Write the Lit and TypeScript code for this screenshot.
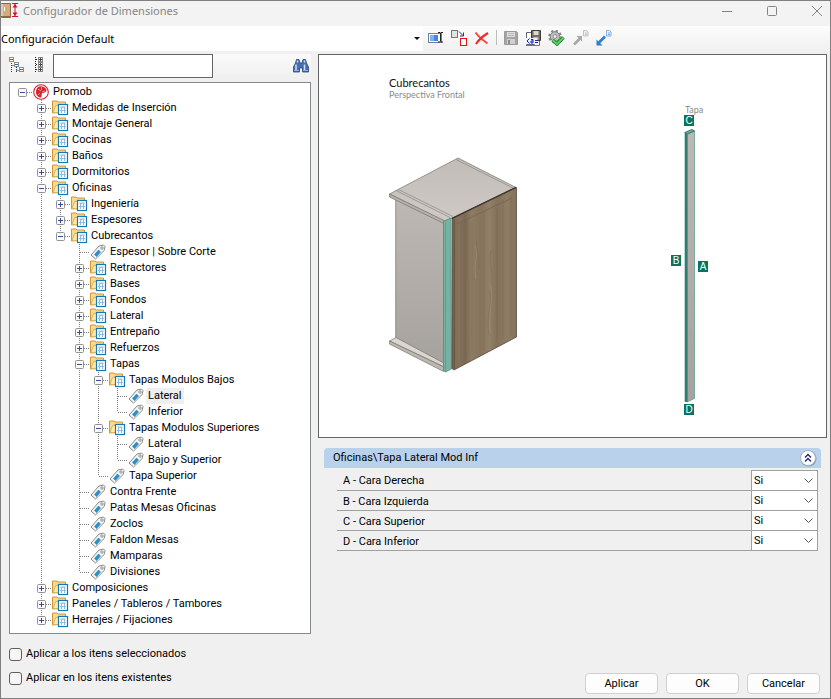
import { LitElement, html, svg, css, nothing } from "lit";
import { customElement, state } from "lit/decorators.js";
import { classMap } from "lit/directives/class-map.js";

interface Node {
  id: string;
  label: string;
  kind: "root" | "folder" | "tag";
  open?: boolean;
  children?: Node[];
}

const tag = (id: string, label: string): Node => ({ id, label, kind: "tag" });
const folder = (id: string, label: string, children?: Node[]): Node => ({
  id, label, kind: "folder", open: !!children, children,
});

const TREE: Node = {
  id: "promob", label: "Promob", kind: "root", open: true,
  children: [
    folder("medidas", "Medidas de Inserción"),
    folder("montaje", "Montaje General"),
    folder("cocinas", "Cocinas"),
    folder("banos", "Baños"),
    folder("dormitorios", "Dormitorios"),
    folder("oficinas", "Oficinas", [
      folder("ingenieria", "Ingeniería"),
      folder("espesores", "Espesores"),
      folder("cubrecantos", "Cubrecantos", [
        tag("espesor", "Espesor | Sobre Corte"),
        folder("retractores", "Retractores"),
        folder("bases", "Bases"),
        folder("fondos", "Fondos"),
        folder("lateral", "Lateral"),
        folder("entrepano", "Entrepaño"),
        folder("refuerzos", "Refuerzos"),
        folder("tapas", "Tapas", [
          folder("bajos", "Tapas Modulos Bajos", [
            tag("bajos-lateral", "Lateral"),
            tag("bajos-inferior", "Inferior"),
          ]),
          folder("superiores", "Tapas Modulos Superiores", [
            tag("sup-lateral", "Lateral"),
            tag("sup-bajo", "Bajo y Superior"),
          ]),
          tag("tapa-superior", "Tapa Superior"),
        ]),
        tag("contra", "Contra Frente"),
        tag("patas", "Patas Mesas Oficinas"),
        tag("zoclos", "Zoclos"),
        tag("faldon", "Faldon Mesas"),
        tag("mamparas", "Mamparas"),
        tag("divisiones", "Divisiones"),
      ]),
    ]),
    folder("composiciones", "Composiciones"),
    folder("paneles", "Paneles / Tableros / Tambores"),
    folder("herrajes", "Herrajes / Fijaciones"),
  ],
};

const PROPS = ["A - Cara Derecha", "B - Cara Izquierda", "C - Cara Superior", "D - Cara Inferior"];

const icons = {
  app: html`<svg width="17" height="17" viewBox="0 0 17 17">
    <rect x="0" y="1" width="10" height="15" rx="1" fill="#8a6a45"/>
    <rect x="0" y="2" width="9" height="12" fill="#d3ab7c"/>
    <rect x="0" y="2" width="2" height="12" fill="#e8cba4"/>
    <rect x="3" y="5" width="1" height="4" fill="#fff"/>
    <path d="M11 1.500h6M11 14.500h6M14 2v12" stroke="#d8102c" fill="none"/>
    <path d="M14 2l-2.500 3.500h5zM14 14l-2.500-3.500h5z" fill="#d8102c"/>
  </svg>`,
  root: html`<svg width="17" height="16" viewBox="0 0 17 16">
    <circle cx="8" cy="8" r="7.300" fill="#fff" stroke="#d5232f" stroke-width="1.100"/>
    <path d="M9 2.500C5 1.500 3 5 3 8c0 3.500 2.500 5.500 5 5.500 1-1.500.500-3 1-4.500 1.500 0 4-.500 4.500-2.500-.500-2.500-2-3.700-4.500-4z" fill="#d5232f"/>
    <path d="M5 5l3 2M8.500 3v3M9 8l3-1M5 11l2-2" stroke="#f6b6ba" stroke-width=".8"/>
  </svg>`,
  folder: html`<svg width="17" height="16" viewBox="0 0 17 16">
    <path d="M.500 13V1h4.500l1 1h7.500v2.500h1.500V12z" fill="#f9d98a" stroke="#d0963c"/>
    <path d="M1 12.500L3.500 5.500h11v7z" fill="#fde9ae" stroke="#e0b458"/>
    <rect x="6.500" y="4.500" width="9" height="10" fill="#fff" stroke="#1379b5" stroke-width="1.200"/>
    <path d="M8.500 6.500h5V8h-5z" fill="#9ec5e4"/>
    <path d="M9.500 7v6M12.500 7v6M8 10.500h6" stroke="#8dbce0" fill="none"/>
  </svg>`,
  tag: html`<svg width="17" height="16" viewBox="0 0 17 16">
    <path d="M1 11L9 2l4.500-1 1.500 1.500-.8 4L5.500 15z" fill="#f3f3f3" stroke="#8a8a8a"/>
    <path d="M4.500 10.500l4-4.500 2 2-4 4.500z" fill="#1c93d2" stroke="#2a80bb" stroke-width=".6"/>
    <circle cx="12" cy="4" r="1.200" fill="#fff" stroke="#777" stroke-width=".8"/>
  </svg>`,
  collapseAll: html`<svg width="17" height="18" viewBox="1 1 17 18">
    <path d="M3.500 5v12M3.500 9.500h4M8.500 11v6M8.500 14.500h4" stroke="#333" stroke-dasharray="1 1" fill="none"/>
    <g fill="#fff" stroke="#8a8f96"><rect x="1.500" y="1.500" width="4" height="4"/><rect x="6.500" y="6.500" width="4" height="4"/><rect x="11.500" y="11.500" width="4" height="4"/></g>
    <path d="M2 3.500h3M7 8.500h3M12 13.500h3" stroke="#2c6fa8"/>
  </svg>`,
  expandAll: html`<svg width="12" height="18" viewBox="1 1 12 18">
    <path d="M2.500 1v16M3 3.500h3M3 8.500h3M3 13.500h3" stroke="#222" stroke-dasharray="1 1" fill="none"/>
    <g fill="#fff" stroke="#888"><rect x="5.500" y="1.500" width="4" height="4"/><rect x="5.500" y="6.500" width="4" height="4"/><rect x="5.500" y="11.500" width="4" height="4"/></g>
    <path d="M6 3.500h3M7.500 2v3M6 8.500h3M7.500 7v3M6 13.500h3M7.500 12v3" stroke="#444"/>
  </svg>`,
  find: html`<svg width="16" height="16" viewBox="0 0 16 16">
    <path d="M3.500 1.500h2.500l1 3.500h2l1-3.500h2.500L13.500 5l2 4v5H9.500v-4h-3v4H.500V9l2-4z" fill="#4a6fb0" stroke="#23447f" stroke-width=".8"/>
    <path d="M3 6.500v6M4.500 2.500v2M11.500 6.500v6M11.500 2.500v2" stroke="#cfe0f7" stroke-width="1.500"/>
    <path d="M1 12.500h5M10 12.500h5" stroke="#8fb0e0"/>
  </svg>`,
  rename: html`<svg width="16" height="16" viewBox="0 0 16 16">
    <rect x=".5" y="3.500" width="13" height="9" fill="#fff" stroke="#71819a"/>
    <rect x="2" y="5" width="8" height="6" fill="#3f86e4"/><rect x="2" y="5" width="4" height="6" fill="#7eb0f2"/>
    <path d="M10 2.500h2l.5.500.5-.500h2M12.500 3v8.500M10 12h2l.5-.500.5.500h2" stroke="#222" fill="none"/>
  </svg>`,
  replicate: html`<svg width="18" height="18" viewBox="0 0 18 18">
    <rect x="1.500" y="1.500" width="6" height="7" fill="#e2e2e2" stroke="#777"/>
    <rect x="10.500" y="9.500" width="6" height="7" fill="#fff" stroke="#e0141c"/>
    <path d="M9 2.500l4 4M13.500 3.500v3.500H10" stroke="#173a78" fill="none"/>
  </svg>`,
  remove: html`<svg width="16" height="16" viewBox="0 0 16 16">
    <path d="M1.500 2.500C4 6 8 9.500 13.500 13.500" stroke="#f04a42" stroke-width="2" fill="none"/>
    <path d="M14 3C9 6 5 9.500 2 14" stroke="#ee2b24" stroke-width="2.200" fill="none"/>
  </svg>`,
  save: html`<svg width="16" height="16" viewBox="0 0 16 16">
    <path d="M1.500 1.500h12l1 1v12h-13z" fill="#a5a5a5" stroke="#9a9a9a"/>
    <rect x="4" y="2" width="8" height="5" fill="#dcdcdc"/><path d="M5 3.500h6M5 5.500h6" stroke="#bbb"/>
    <rect x="4" y="9" width="8" height="5" fill="#d0d0d0"/><rect x="5" y="10" width="2" height="4" fill="#8d8d8d"/>
  </svg>`,
  saveXml: html`<svg width="17" height="16" viewBox="0 0 17 16">
    <path d="M1.500 2.500h8v12h-8z" fill="#fff" stroke="#667"/>
    <path d="M6.500.500h9v10h-9z" fill="#6f6f5c" stroke="#3e3e34"/><rect x="8.500" y="1" width="5" height="4" fill="#dadad4"/><rect x="8.500" y="7" width="5" height="3" fill="#bdbdb4"/>
    <path d="M1 8h11v6H1z" fill="#eef2fb"/>
    <path d="M4.500 8.500L2 11l2.500 2.500M6 9.500h2v3.500h-2v-2h2M10 10.500h3M10 12.500h3" stroke="#1226c8" fill="none"/>
    <path d="M1 15.500h13.500V11" stroke="#5677ab" fill="none"/>
  </svg>`,
  apply: html`<svg width="18" height="16" viewBox="0 0 18 16">
    <circle cx="7" cy="6.500" r="5.500" fill="none" stroke="#858585" stroke-width="2.600" stroke-dasharray="2.200 2.100"/>
    <circle cx="7" cy="6.500" r="4.800" fill="#bcbcbc" stroke="#808080"/><circle cx="7" cy="6.500" r="1.800" fill="#f3f3f3" stroke="#777" stroke-width=".7"/>
    <path d="M4.500 10l4.500 4 6.500-6.500" stroke="#16802c" stroke-width="3.400" fill="none"/>
    <path d="M4.500 10l4.500 4 6.500-6.500" stroke="#58d45f" stroke-width="1.800" fill="none"/>
  </svg>`,
  importOff: html`<svg width="18" height="16" viewBox="0 0 18 16">
    <path d="M2 14.500l6-6" stroke="#a8a8a8" stroke-width="2.600"/><path d="M4.500 6H10v5.500z" fill="#a8a8a8"/>
    <path d="M11.500.500h3l1.500 1.500v4h-4.500z" fill="#eee" stroke="#c2c2c2"/><path d="M13 3h2M13 4.500h2" stroke="#b5b5b5" stroke-width=".7"/>
  </svg>`,
  exportOn: html`<svg width="17" height="16" viewBox="0 0 17 16">
    <path d="M3 12.500l6-6" stroke="#2c7cd0" stroke-width="2.600"/><path d="M.500 9.500v6H6.500z" fill="#2c7cd0"/>
    <path d="M10.500.500h3l1.500 1.500v4h-4.500z" fill="#eaf3ff" stroke="#7fb0e6"/><path d="M12 3h2M12 4.500h2" stroke="#4c8fd8" stroke-width=".7"/>
  </svg>`,
};

@customElement("config-preview")
class ConfigPreview extends LitElement {
  static styles = css`
    :host { display: block; box-sizing: border-box; background: #fff; border: 1px solid #646464; }
    svg { display: block; width: 100%; height: auto; }
    .title { font: 11px Lato, sans-serif; fill: #111; }
    .sub { font: 9px Lato, sans-serif; fill: #8a8a8a; }
    .mark { font: 10px "Liberation Sans", sans-serif; fill: #fff; text-anchor: middle; }
  `;

  private marker(letter: string, x: number, y: number) {
    return svg`<rect x=${x} y=${y} width="10" height="11" fill="#08735f"></rect>
      <text class="mark" x=${x + 5} y=${y + 9}>${letter}</text>`;
  }

  render() {
    return html`<svg viewBox="319 55 507 382" role="img" aria-label="Cubrecantos, Perspectiva Frontal">
      <defs>
        <linearGradient id="top" x1="0" y1="0" x2="0" y2="1"><stop offset="0" stop-color="#c1bcb7"/><stop offset="1" stop-color="#cfcac6"/></linearGradient>
        <linearGradient id="side" x1="0" y1="0" x2="0" y2="1"><stop offset="0" stop-color="#bdb8b3"/><stop offset="1" stop-color="#a6a29e"/></linearGradient>
        <linearGradient id="wood" x1="0" y1="0" x2="1" y2="0">
          <stop offset="0" stop-color="#7d6b55"/><stop offset=".12" stop-color="#84725c"/><stop offset=".2" stop-color="#7b6852"/>
          <stop offset=".3" stop-color="#8d7b64"/><stop offset=".45" stop-color="#86735c"/><stop offset=".58" stop-color="#927f68"/>
          <stop offset=".7" stop-color="#84715a"/><stop offset=".85" stop-color="#8f7c65"/><stop offset="1" stop-color="#84725b"/>
        </linearGradient>
      </defs>
      <text class="title" x="389" y="87">Cubrecantos</text>
      <text class="sub" x="389" y="98">Perspectiva Frontal</text>
      <g stroke-width=".7" stroke-linejoin="round">
        <path d="M395.700 199L443.700 222V364L395.700 338.500z" fill="url(#side)" stroke="#77736f"/>
        <path d="M389.500 341L396 337.500 443.700 363V366.500z" fill="#dcd6d0" stroke="#77736f"/>
        <path d="M389.500 341L443.700 367V371.500L389.500 344z" fill="#bdb7b1" stroke="#77736f"/>
        <path d="M389.500 194L458 158 516 187.500 452 218.500 444 221z" fill="url(#top)" stroke="#77736f"/>
        <path d="M389.500 194L444 220.500V223.500L389.500 197z" fill="#b7b1ab" stroke="#77736f"/>
        <path d="M396 190.500L450 217.500M398.500 189.500L453 216.500M456 159.500L514 188.500" fill="none" stroke="#8b8783"/>
        <path d="M443.500 221.500L450.700 218 451.500 369 445.500 372 443.500 370.500z" fill="#76b1a2" stroke="#3f9485"/>
        <path d="M445.500 222.500V372" stroke="#4b9c8d"/>
        <path d="M452 218.500L516.500 187.500V337L454 370 452 368.500z" fill="url(#wood)" stroke="#4c3d30"/>
        <path d="M454.200 219.500V369" stroke="#54432f"/>
        <path d="M452 218.300L516 187.300" stroke="#42372e" stroke-width="1.400"/>
        <path d="M457 224L512 198" stroke="#75624c"/>
        <g fill="none" stroke="#75624c" opacity=".4">
          <path d="M461 222v140M466 220c2 40-2 90 0 138M472 222v130M484 212v138M497 208v135M503 200v140M511 196v140"/>
          <path d="M477 240c-3 10 5 14 1 30M489 290c5 14-4 24 0 45M491 250c-3 12 3 24 0 36"/>
        </g>
        <path d="M475 245c4 10-2 20 1 34M490 282c4 16-2 30 0 52" stroke="#aa957b" fill="none" opacity=".6"/>
      </g>
      <text class="sub" x="685" y="113">Tapa</text>
      <path d="M687 133.500L694.500 131V398.500L687 402z" fill="url(#side)" stroke="#4f9c8c" stroke-width=".7"/>
      <path d="M684.700 132.500L687.500 133.500V402H684.700z" fill="#2f7f70"/>
      <path d="M684.700 132.500L692 129.500 694.500 131 687.500 134z" fill="#7aa79d" stroke="#2f7f70"/>
      ${this.marker("C", 684, 115)}${this.marker("B", 671, 255)}${this.marker("A", 698, 261)}${this.marker("D", 684, 404)}
    </svg>`;
  }
}

@customElement("app-root")
class AppRoot extends LitElement {
  @state() private openIds = new Set<string>(this.collectOpen(TREE));
  @state() private selected = "bajos-lateral";
  @state() private propsOpen = true;

  private collectOpen(n: Node): string[] {
    return [...(n.open ? [n.id] : []), ...(n.children ?? []).flatMap((c) => this.collectOpen(c))];
  }

  static styles = css`
    :host { display: block; font-family: Roboto, sans-serif; font-size: 11px; line-height: 16px; color: #000; }
    * { box-sizing: border-box; }
    svg { display: block; flex: none; }
    button, input, select { font: inherit; color: inherit; margin: 0; }
    .window { display: flex; flex-direction: column; min-height: 100vh; background: #f0f0f0; border: 1px solid #7f7f7f; }
    .titlebar { display: flex; align-items: center; height: 25px; padding: 0 5px 6px 0; background: #f3f3f3; color: #858585; font-family: "Noto Sans", sans-serif; }
    .titlebar h1 { flex: 1; margin: 0 0 0 5px; font-size: 11px; font-weight: 400; line-height: 16px; }
    .winbtns { display: flex; gap: 29px; }
    .bare { display: grid; place-items: center; padding: 0; border: 0; background: none; }
    .toolbar { display: flex; align-items: center; height: 25px; background: linear-gradient(#fdfdfd, #f0f0f0); }
    .combo { position: relative; width: 422px; height: 25px; }
    .combo select { width: 100%; height: 100%; padding: 0; border: 0; appearance: none; background: #fff; font-family: "Noto Sans", sans-serif; }
    .combo svg { position: absolute; right: 3px; top: 11px; pointer-events: none; }
    .tools { display: flex; align-items: center; gap: 6px; padding: 0 0 2px 5px; }
    .sep { width: 1px; height: 15px; background: #bdbdbd; }
    .main { flex: 1; display: grid; grid-template-columns: 302px minmax(0, 1fr); gap: 7px; padding: 3px 3px 6px 8px; }
    .side, .detail { display: flex; flex-direction: column; }
    .find { display: flex; align-items: center; height: 24px; margin-bottom: 4px; background: linear-gradient(#fafafa, #f0f0f0); }
    .find input { width: 160px; height: 24px; margin: 0 auto 0 7px; padding: 0 4px; border: 1px solid #646464; background: #fff; }
    .find .last { margin-right: 2px; }
    .levels { display: flex; gap: 8px; }
    .tree { flex: 1; margin: 0; padding: 1px 0 5px 3px; border: 1px solid #828790; background: #fff; list-style: none; }
    .tree ul { margin: 0; padding: 0; list-style: none; }
    .row { display: flex; height: 16px; }
    .cell { position: relative; width: 19px; height: 16px; flex: none; }
    .cell + svg { margin-left: 1px; }
    .label { margin-left: 1px; padding: 0 2px; border: 0; background: none; line-height: 16px; text-align: left; white-space: nowrap; }
    .label.on { background: #efefef; }
    .detail { gap: 10px; }
    .group { margin: 0 6px; }
    .head { display: flex; align-items: center; justify-content: space-between; height: 20px; padding: 0 4px 0 9px; border-radius: 4px 4px 0 0; background: #b9d1ea; }
    .head h2 { margin: 0; font-size: 11px; font-weight: 400; }
    .props { width: calc(100% - 16px); margin: 2px 3px 0 13px; border-collapse: collapse; }
    .props th, .props td { height: 20px; padding: 0; border-bottom: 1px solid #a0a0a0; font-weight: 400; text-align: left; }
    .props th { padding: 2px 0 0 6px; }
    .props td { position: relative; width: 66px; border: 1px solid #a0a0a0; background: #fff; }
    .props select { display: block; width: 100%; height: 19px; padding: 0 0 0 2px; border: 0; appearance: none; background: none; }
    .props td svg { position: absolute; right: 4px; top: 7px; pointer-events: none; }
    .foot { display: flex; align-items: flex-end; justify-content: space-between; padding: 6px 10px 4px 8px; }
    .checks { display: grid; gap: 8px; padding-bottom: 8px; }
    .checks label { display: flex; align-items: center; gap: 4px; }
    .checks input { width: 13px; height: 13px; appearance: none; border: 1px solid #5f5f5f; border-radius: 3px; background: #f6f6f6; }
    .checks input:checked { background: #0067c0; }
    .actions { display: flex; gap: 8px; }
    .actions button { width: 73px; height: 21px; padding: 0; border: 1px solid #d0d0d0; border-radius: 4px; background: #fdfdfd; }
  `;

  private toggle(id: string) {
    const next = new Set(this.openIds);
    next.has(id) ? next.delete(id) : next.add(id);
    this.openIds = next;
  }

  private guide(right: boolean, down: boolean, up = true) {
    return svg`${up ? svg`<path d=${down ? "M9.500 0V16" : "M9.500 0V8"}></path>` : nothing}${right ? svg`<path d="M10 8.500H19"></path>` : nothing}`;
  }

  private node(n: Node, rails: boolean[], last: boolean): unknown {
    const open = this.openIds.has(n.id);
    const root = n.kind === "root";
    const lines = (body: unknown) =>
      html`<svg width="19" height="16" viewBox="0 0 19 16" fill="none" stroke="#808080" stroke-dasharray="1 1">${body}</svg>`;
    const box = svg`<g stroke-dasharray="none"><rect x="5.500" y="4.500" width="8" height="8" rx="1" fill="#fafafa" stroke="#919191"></rect>
      <path d=${open ? "M7 8.500h5" : "M7 8.500h5M9.500 6v5"} stroke="#34509c"></path></g>`;
    return html`<li>
      <div class="row">
        ${rails.map((on) => html`<span class="cell">${on ? lines(this.guide(false, true)) : nothing}</span>`)}
        ${n.kind === "tag"
          ? html`<span class="cell">${lines(this.guide(true, !last))}</span>`
          : html`<button class="cell bare" aria-label=${"Expandir " + n.label} aria-expanded=${open} @click=${() => this.toggle(n.id)}>
              ${lines(svg`${this.guide(true, !last, !root)}${box}`)}</button>`}
        ${icons[n.kind]}
        <button class=${classMap({ label: true, on: this.selected === n.id })} @click=${() => (this.selected = n.id)}>${n.label}</button>
      </div>
      ${open && n.children
        ? html`<ul>${n.children.map((c, i) => this.node(c, [...rails, !last], i === n.children!.length - 1))}</ul>`
        : nothing}
    </li>`;
  }

  render() {
    const tool = (name: string, icon: unknown) => html`<button class="bare" aria-label=${name}>${icon}</button>`;
    return html`<div class="window">
      <header class="titlebar">
        ${icons.app}
        <h1>Configurador de Dimensiones</h1>
        <div class="winbtns">
          ${tool("Minimizar", html`<svg width="16" height="16" stroke="#858585"><path d="M3 8.500h10"/></svg>`)}
          ${tool("Maximizar", html`<svg width="16" height="16" fill="none" stroke="#858585"><rect x="3.500" y="3.500" width="9" height="9" rx="1"/></svg>`)}
          ${tool("Cerrar", html`<svg width="16" height="16" stroke="#858585"><path d="M3 3l10 10M13 3L3 13"/></svg>`)}
        </div>
      </header>
      <div class="toolbar">
        <div class="combo">
          <select aria-label="Configuración"><option>Configuración Default</option></select>
          <svg width="6" height="4"><path d="M0 0h6L3 3z" fill="#111"/></svg>
        </div>
        <div class="tools">
          ${tool("Renombrar", icons.rename)}${tool("Duplicar", icons.replicate)}${tool("Eliminar", icons.remove)}
          <span class="sep"></span>
          ${tool("Guardar", icons.save)}${tool("Guardar XML", icons.saveXml)}${tool("Validar", icons.apply)}
          ${tool("Importar", icons.importOff)}${tool("Exportar", icons.exportOn)}
        </div>
      </div>
      <main class="main">
        <section class="side">
          <div class="find">
            <div class="levels">${tool("Contraer todo", icons.collapseAll)}${tool("Expandir todo", icons.expandAll)}</div>
            <input type="text" aria-label="Buscar">
            <button class="bare last" aria-label="Buscar">${icons.find}</button>
          </div>
          <ul class="tree">${this.node(TREE, [], true)}</ul>
        </section>
        <section class="detail">
          <config-preview></config-preview>
          <div class="group">
            <div class="head">
              <h2>Oficinas\\Tapa Lateral Mod Inf</h2>
              <button class="bare" aria-label="Contraer" aria-expanded=${this.propsOpen} @click=${() => (this.propsOpen = !this.propsOpen)}>
                <svg width="18" height="18" fill="none"><circle cx="9.500" cy="9.500" r="8" fill="#8799b5"/><circle cx="9" cy="9" r="7.500" fill="#fff" stroke="#a9b3c4"/>
                <path d="M6 8.500l3-3 3 3M6 12.500l3-3 3 3" stroke="#1f2d66" stroke-width="1.400"/></svg>
              </button>
            </div>
            ${this.propsOpen
              ? html`<table class="props"><tbody>${PROPS.map((p, i) => html`<tr>
                  <th scope="row"><label for=${"p" + i}>${p}</label></th>
                  <td><select id=${"p" + i}><option>Si</option><option>No</option></select>
                    <svg width="9" height="6" fill="none" stroke="#555"><path d="M0.500 0.500l4 4 4-4"/></svg></td>
                </tr>`)}</tbody></table>`
              : nothing}
          </div>
        </section>
      </main>
      <footer class="foot">
        <div class="checks">
          <label><input type="checkbox">Aplicar a los itens seleccionados</label>
          <label><input type="checkbox">Aplicar en los itens existentes</label>
        </div>
        <div class="actions"><button>Aplicar</button><button>OK</button><button>Cancelar</button></div>
      </footer>
    </div>`;
  }
}
